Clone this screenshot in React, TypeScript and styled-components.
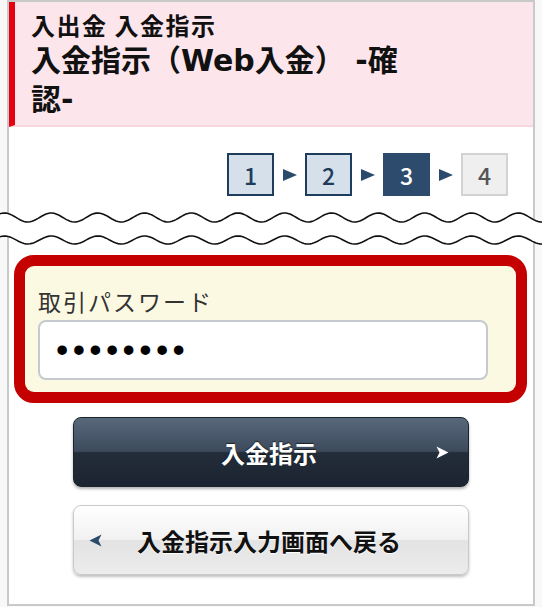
import React from 'react';
import styled, { createGlobalStyle } from 'styled-components';

const GlobalStyle = createGlobalStyle`
  html, body {
    margin: 0;
    padding: 0;
    background: #f8f8f8;
  }
  body {
    font-family: "Noto Sans CJK JP", "Noto Sans", sans-serif;
  }
`;

const Page = styled.div`
  width: 542px;
  height: 607px;
  overflow: hidden;
`;

const Frame = styled.div`
  box-sizing: border-box;
  margin-left: 7px;
  width: 528px;
  height: 606px;
  border: 2px solid #c9c9c9;
  background: #fff;
  display: flex;
  flex-direction: column;
`;

const Header = styled.header`
  background: #fde6eb;
  border-left: 6px solid #e50012;
  border-bottom: 2px solid #f8d6dd;
  padding: 8px 20px 6px 16px;
  color: #111;
`;

const Breadcrumb = styled.div`
  font-size: 24px;
  line-height: 30px;
  font-weight: 700;
  letter-spacing: 1.5px;
`;

const Title = styled.h1`
  margin: 1px 0 0;
  font-family: "DejaVu Sans", "Noto Sans CJK JP", sans-serif;
  font-size: 30px;
  line-height: 39px;
  font-weight: 700;
`;

const Steps = styled.div`
  margin: 26px 25px 0 0;
  display: flex;
  justify-content: flex-end;
  align-items: center;
  gap: 8px;
`;

type StepState = 'done' | 'current' | 'todo';

const stepColors: Record<StepState, { bg: string; border: string; text: string }> = {
  done: { bg: '#d6e0ea', border: '#1e3d5c', text: '#1e3d5c' },
  current: { bg: '#2d4b6d', border: '#2d4b6d', text: '#fff' },
  todo: { bg: '#efefef', border: '#d2d2d2', text: '#555' },
};

const StepBox = styled.div<{ $state: StepState }>`
  box-sizing: border-box;
  width: 47px;
  height: 43px;
  display: flex;
  align-items: center;
  justify-content: center;
  background: ${({ $state }) => stepColors[$state].bg};
  border: 2px solid ${({ $state }) => stepColors[$state].border};
  color: ${({ $state }) => stepColors[$state].text};
  font-size: 23px;
  font-weight: 500;
`;

const StepArrow = styled.svg`
  display: block;
  width: 15px;
  height: 12px;
`;

const Cut = styled.svg`
  display: block;
  width: calc(100% + 18px);
  height: 45px;
  margin: 9px -9px 0;
`;

const PasswordPanel = styled.section`
  margin: 5px 6px 0 5px;
  border: 11px solid #c40000;
  border-radius: 20px;
  background: #c40000;
`;

const PanelInner = styled.div`
  background: #fcf9e3;
  border-radius: 9px;
  padding: 21px 27px 12px 13px;
`;

const FieldLabel = styled.label`
  display: block;
  font-size: 23px;
  line-height: 28px;
  letter-spacing: 2px;
  color: #333;
  margin-bottom: 5px;
`;

const PasswordInput = styled.input`
  box-sizing: border-box;
  display: block;
  width: 450px;
  height: 60px;
  border: 2px solid #c6c9cf;
  border-radius: 8px;
  background: #fff;
  padding: 0 16px;
  font-family: "Liberation Sans", sans-serif;
  font-size: 35px;
  letter-spacing: 4.4px;
  color: #000;
  outline: none;
`;

const Actions = styled.div`
  margin-top: 14px;
  display: flex;
  flex-direction: column;
  align-items: center;
  gap: 18px;
`;

const ActionButton = styled.button<{ $variant: 'primary' | 'back' }>`
  box-sizing: border-box;
  width: 396px;
  height: 70px;
  padding: 0 19px 0 15px;
  display: grid;
  grid-template-columns: 1fr auto 1fr;
  align-items: center;
  border-radius: 8px;
  font-family: "Noto Sans CJK JP", sans-serif;
  font-size: 24px;
  font-weight: 700;
  cursor: pointer;
  ${({ $variant }) =>
    $variant === 'primary'
      ? `
    border: 1px solid #1b232d;
    background: linear-gradient(to bottom, #58687b 0%, #3c4a5c 49%, #232d39 51%, #1b2430 100%);
    color: #fff;
    text-shadow: 0 -1px 1px rgba(0, 0, 0, 0.6);
    box-shadow: 0 2px 3px rgba(0, 0, 0, 0.3);
  `
      : `
    border: 1px solid #c9c9c9;
    background: linear-gradient(to bottom, #ffffff 0%, #f1f1f1 49%, #e3e3e3 51%, #ececec 100%);
    color: #111;
    text-shadow: 0 1px 1px #fff;
    box-shadow: 0 2px 3px rgba(0, 0, 0, 0.25);
  `}
`;

const ButtonLabel = styled.span`
  grid-column: 2;
`;

const Chevron = styled.svg<{ $side: 'left' | 'right' }>`
  display: block;
  width: 13px;
  height: 13px;
  grid-column: ${({ $side }) => ($side === 'left' ? 1 : 3)};
  grid-row: 1;
  justify-self: ${({ $side }) => ($side === 'left' ? 'start' : 'end')};
`;

// wavy "cut" across the page
const WAVE_PERIOD = 46.7;
const wavePoints = (cy: number, amp: number) => {
  const pts: string[] = [];
  for (let x = 0; x <= 542; x += 2) {
    const y = cy - amp * Math.cos((2 * Math.PI * (x - 4.5)) / WAVE_PERIOD);
    pts.push(`${x},${y.toFixed(2)}`);
  }
  return pts;
};
const topWave = wavePoints(12.5, 4.5);
const bottomWave = wavePoints(35, 4);

const steps: { n: number; state: StepState }[] = [
  { n: 1, state: 'done' },
  { n: 2, state: 'done' },
  { n: 3, state: 'current' },
  { n: 4, state: 'todo' },
];

const App: React.FC = () => {
  return (
    <Page>
      <GlobalStyle />
      <Frame>
        <Header>
          <Breadcrumb>入出金 入金指示</Breadcrumb>
          <Title>
            入金指示（Web入金） -確
            <br />
            認-
          </Title>
        </Header>

        <Steps>
          {steps.map((s, i) => (
            <React.Fragment key={s.n}>
              {i > 0 && (
                <StepArrow viewBox="0 0 15 12">
                  <polygon points="1,0 15,6 1,12" fill="#2b4a6c" />
                </StepArrow>
              )}
              <StepBox $state={s.state}>{s.n}</StepBox>
            </React.Fragment>
          ))}
        </Steps>

        <Cut viewBox="0 0 542 45" preserveAspectRatio="none">
          <polygon points={[...topWave, ...bottomWave.slice().reverse()].join(' ')} fill="#fff" />
          <polyline points={topWave.join(' ')} fill="none" stroke="#111" strokeWidth="1.6" />
          <polyline points={bottomWave.join(' ')} fill="none" stroke="#111" strokeWidth="1.6" />
        </Cut>

        <PasswordPanel>
          <PanelInner>
            <FieldLabel htmlFor="trade-pw">取引パスワード</FieldLabel>
            <PasswordInput id="trade-pw" type="password" defaultValue="12345678" readOnly />
          </PanelInner>
        </PasswordPanel>

        <Actions>
          <ActionButton $variant="primary">
            <ButtonLabel>入金指示</ButtonLabel>
            <Chevron $side="right" viewBox="0 0 13 13">
              <path d="M0.5 0.5 L12.5 6.5 L0.5 12.5 L3.5 6.5 Z" fill="#fff" />
            </Chevron>
          </ActionButton>
          <ActionButton $variant="back">
            <Chevron $side="left" viewBox="0 0 13 13">
              <path d="M12.5 0.5 L0.5 6.5 L12.5 12.5 L9.5 6.5 Z" fill="#2b4a6c" />
            </Chevron>
            <ButtonLabel>入金指示入力画面へ戻る</ButtonLabel>
          </ActionButton>
        </Actions>
      </Frame>
    </Page>
  );
};

export default App;
